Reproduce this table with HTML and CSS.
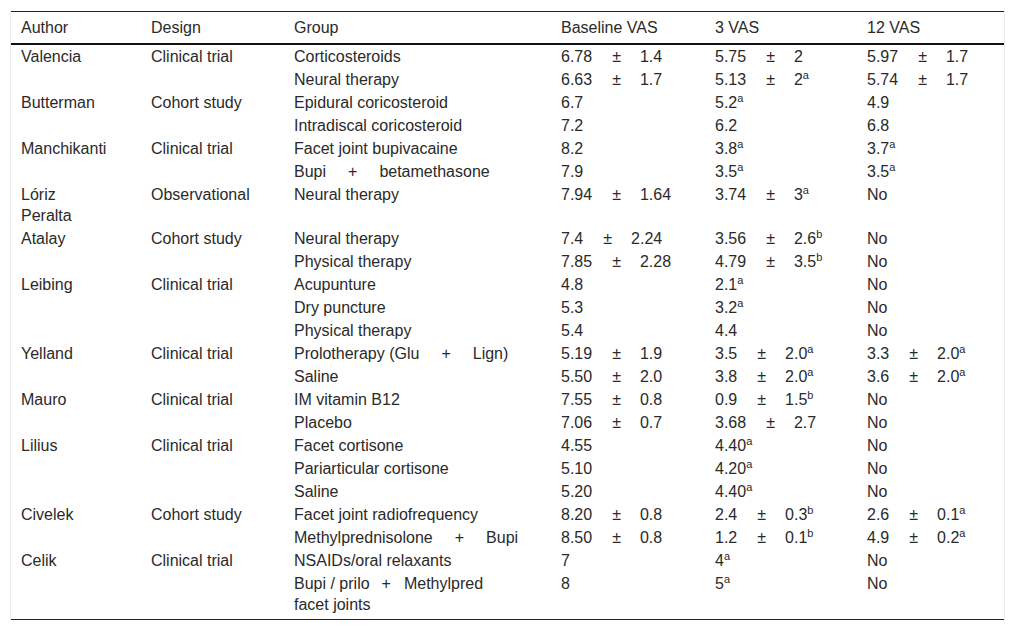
FILE: index.html
```html
<!DOCTYPE html>
<html>
<head>
<meta charset="utf-8">
<link rel="stylesheet" href="styles.css">
</head>
<body>
<div class="wrap">
<table class="data">
<colgroup>
<col class="c-author"><col class="c-design"><col class="c-group"><col class="c-base"><col class="c-3"><col class="c-12">
</colgroup>
<thead>
<tr><th>Author</th><th>Design</th><th>Group</th><th>Baseline VAS</th><th>3 VAS</th><th>12 VAS</th></tr>
</thead>
<tbody>
<tr><td>Valencia</td><td>Clinical trial</td><td>Corticosteroids</td><td>6.78<span class="pm">±</span>1.4</td><td>5.75<span class="pm">±</span>2</td><td>5.97<span class="pm">±</span>1.7</td></tr>
<tr><td></td><td></td><td>Neural therapy</td><td>6.63<span class="pm">±</span>1.7</td><td>5.13<span class="pm">±</span>2<sup>a</sup></td><td>5.74<span class="pm">±</span>1.7</td></tr>
<tr><td>Butterman</td><td>Cohort study</td><td>Epidural coricosteroid</td><td>6.7</td><td>5.2<sup>a</sup></td><td>4.9</td></tr>
<tr><td></td><td></td><td>Intradiscal coricosteroid</td><td>7.2</td><td>6.2</td><td>6.8</td></tr>
<tr><td>Manchikanti</td><td>Clinical trial</td><td>Facet joint bupivacaine</td><td>8.2</td><td>3.8<sup>a</sup></td><td>3.7<sup>a</sup></td></tr>
<tr><td></td><td></td><td>Bupi<span class="plus">+</span>betamethasone</td><td>7.9</td><td>3.5<sup>a</sup></td><td>3.5<sup>a</sup></td></tr>
<tr><td>Lóriz<br>Peralta</td><td>Observational</td><td>Neural therapy</td><td>7.94<span class="pm">±</span>1.64</td><td>3.74<span class="pm">±</span>3<sup>a</sup></td><td>No</td></tr>
<tr><td>Atalay</td><td>Cohort study</td><td>Neural therapy</td><td>7.4<span class="pm">±</span>2.24</td><td>3.56<span class="pm">±</span>2.6<sup>b</sup></td><td>No</td></tr>
<tr><td></td><td></td><td>Physical therapy</td><td>7.85<span class="pm">±</span>2.28</td><td>4.79<span class="pm">±</span>3.5<sup>b</sup></td><td>No</td></tr>
<tr><td>Leibing</td><td>Clinical trial</td><td>Acupunture</td><td>4.8</td><td>2.1<sup>a</sup></td><td>No</td></tr>
<tr><td></td><td></td><td>Dry puncture</td><td>5.3</td><td>3.2<sup>a</sup></td><td>No</td></tr>
<tr><td></td><td></td><td>Physical therapy</td><td>5.4</td><td>4.4</td><td>No</td></tr>
<tr><td>Yelland</td><td>Clinical trial</td><td>Prolotherapy (Glu<span class="plus">+</span>Lign)</td><td>5.19<span class="pm">±</span>1.9</td><td>3.5<span class="pm">±</span>2.0<sup>a</sup></td><td>3.3<span class="pm">±</span>2.0<sup>a</sup></td></tr>
<tr><td></td><td></td><td>Saline</td><td>5.50<span class="pm">±</span>2.0</td><td>3.8<span class="pm">±</span>2.0<sup>a</sup></td><td>3.6<span class="pm">±</span>2.0<sup>a</sup></td></tr>
<tr><td>Mauro</td><td>Clinical trial</td><td>IM vitamin B12</td><td>7.55<span class="pm">±</span>0.8</td><td>0.9<span class="pm">±</span>1.5<sup>b</sup></td><td>No</td></tr>
<tr><td></td><td></td><td>Placebo</td><td>7.06<span class="pm">±</span>0.7</td><td>3.68<span class="pm">±</span>2.7</td><td>No</td></tr>
<tr><td>Lilius</td><td>Clinical trial</td><td>Facet cortisone</td><td>4.55</td><td>4.40<sup>a</sup></td><td>No</td></tr>
<tr><td></td><td></td><td>Pariarticular cortisone</td><td>5.10</td><td>4.20<sup>a</sup></td><td>No</td></tr>
<tr><td></td><td></td><td>Saline</td><td>5.20</td><td>4.40<sup>a</sup></td><td>No</td></tr>
<tr><td>Civelek</td><td>Cohort study</td><td>Facet joint radiofrequency</td><td>8.20<span class="pm">±</span>0.8</td><td>2.4<span class="pm">±</span>0.3<sup>b</sup></td><td>2.6<span class="pm">±</span>0.1<sup>a</sup></td></tr>
<tr><td></td><td></td><td>Methylprednisolone<span class="plus">+</span>Bupi</td><td>8.50<span class="pm">±</span>0.8</td><td>1.2<span class="pm">±</span>0.1<sup>b</sup></td><td>4.9<span class="pm">±</span>0.2<sup>a</sup></td></tr>
<tr><td>Celik</td><td>Clinical trial</td><td>NSAIDs/oral relaxants</td><td>7</td><td>4<sup>a</sup></td><td>No</td></tr>
<tr class="last"><td></td><td></td><td>Bupi / prilo<span class="plus plus-narrow">+</span>Methylpred<br>facet joints</td><td>8</td><td>5<sup>a</sup></td><td>No</td></tr>
</tbody>
</table>
</div>
</body>
</html>
```
FILE: styles.css
```css
html, body {
  margin: 0;
  padding: 0;
  background: #ffffff;
}

body {
  font-family: "Liberation Sans", Arial, sans-serif;
  font-size: 16px;
  color: #2a2a2a;
}

.wrap {
  margin: 11px 10px 0 10px;
  border-left: 1px solid #ececec;
  border-right: 1px solid #ececec;
}

.data {
  width: 100%;
  border-collapse: collapse;
  table-layout: fixed;
  border-top: 1px solid #222;
  border-bottom: 1px solid #222;
}

.c-author { width: 130px; }
.c-design { width: 143px; }
.c-group { width: 267px; }
.c-base { width: 154px; }
.c-3 { width: 152px; }
.c-12 { width: auto; }

.data th {
  font-weight: normal;
  text-align: left;
  padding: 5px 4px 5px 10px;
  line-height: 21px;
  border-bottom: 2px solid #111;
  white-space: nowrap;
}

.data td {
  text-align: left;
  vertical-align: top;
  padding: 1px 4px 1px 10px;
  line-height: 21px;
  white-space: nowrap;
}

.data tr.last td {
  padding-bottom: 4px;
}

.pm {
  margin: 0 19px 0 20px;
}

.plus {
  margin: 0 22px;
}

.plus-narrow {
  margin: 0 13px 0 12px;
}

sup {
  font-size: 11px;
  line-height: 0;
  vertical-align: 6px;
}
```
